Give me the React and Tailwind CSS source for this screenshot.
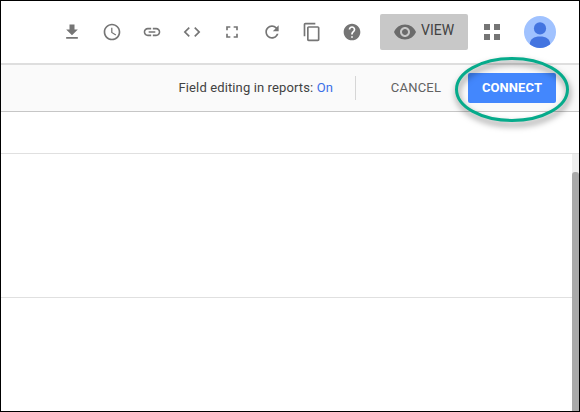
const ICONS = [
  { name: 'Download', d: 'M19 9h-4V3H9v6H5l7 7 7-7zM5 18v2h14v-2H5z' },
  { name: 'Schedule', d: 'M11.99 2C6.47 2 2 6.48 2 12s4.47 10 9.99 10C17.52 22 22 17.52 22 12S17.52 2 11.99 2zM12 20c-4.42 0-8-3.58-8-8s3.58-8 8-8 8 3.58 8 8-3.58 8-8 8zm.5-13H11v6l5.25 3.15.75-1.23-4.5-2.67z' },
  { name: 'Link', d: 'M3.9 12c0-1.71 1.39-3.1 3.1-3.1h4V7H7c-2.76 0-5 2.24-5 5s2.24 5 5 5h4v-1.9H7c-1.71 0-3.1-1.39-3.1-3.1zM8 13h8v-2H8v2zm9-6h-4v1.9h4c1.71 0 3.1 1.39 3.1 3.1s-1.39 3.1-3.1 3.1h-4V17h4c2.76 0 5-2.24 5-5s-2.24-5-5-5z' },
  { name: 'Embed', d: 'M9.4 16.6L4.8 12l4.6-4.6L8 6l-6 6 6 6 1.4-1.4zm5.2 0l4.6-4.6-4.6-4.6L16 6l6 6-6 6-1.4-1.4z' },
  { name: 'Fullscreen', d: 'M7 14H5v5h5v-2H7v-3zm-2-4h2V7h3V5H5v5zm12 7h-3v2h5v-5h-2v3zM14 5v2h3v3h2V5h-5z' },
  { name: 'Refresh', d: 'M17.65 6.35C16.2 4.9 14.21 4 12 4c-4.42 0-7.99 3.58-7.99 8s3.57 8 7.99 8c3.73 0 6.84-2.55 7.73-6h-2.08c-.82 2.33-3.04 4-5.65 4-3.31 0-6-2.69-6-6s2.69-6 6-6c1.66 0 3.14.69 4.22 1.78L13 11h7V4l-2.35 2.35z' },
  { name: 'Copy', d: 'M16 1H4c-1.1 0-2 .9-2 2v14h2V3h12V1zm3 4H8c-1.1 0-2 .9-2 2v14c0 1.1.9 2 2 2h11c1.1 0 2-.9 2-2V7c0-1.1-.9-2-2-2zm0 16H8V7h11v14z' },
  { name: 'Help', d: 'M12 2C6.48 2 2 6.48 2 12s4.48 10 10 10 10-4.48 10-10S17.52 2 12 2zm1 17h-2v-2h2v2zm2.07-7.75l-.9.92C13.45 12.9 13 13.5 13 15h-2v-.5c0-1.1.45-2.1 1.17-2.83l1.24-1.26c.37-.36.59-.86.59-1.41 0-1.1-.9-2-2-2s-2 .9-2 2H8c0-2.21 1.79-4 4-4s4 1.79 4 4c0 .88-.36 1.68-.93 2.25z' },
];

const EYE =
  'M12 4.5C7 4.5 2.73 7.61 1 12c1.73 4.39 6 7.5 11 7.5s9.27-3.11 11-7.5c-1.73-4.39-6-7.5-11-7.5zM12 17c-2.76 0-5-2.24-5-5s2.24-5 5-5 5 2.24 5 5-2.24 5-5 5zm0-8c-1.66 0-3 1.34-3 3s1.34 3 3 3 3-1.34 3-3-1.34-3-3-3z';

function Icon({ d, className }) {
  return (
    <svg viewBox="0 0 24 24" fill="currentColor" aria-hidden="true" className={className}>
      <path d={d} />
    </svg>
  );
}

function Avatar() {
  return (
    <svg viewBox="0 0 32 32" className="ml-6 size-8" aria-label="Account">
      <circle cx="16" cy="16" r="16" fill="#a0c2ff" />
      <circle cx="16" cy="12.4" r="6.1" fill="#4374e0" />
      <path d="M5.8 28.3C5.8 23 10 20.4 16 20.4S26.2 23 26.2 28.3A16 16 0 0 1 5.8 28.3z" fill="#4374e0" />
    </svg>
  );
}

function Toolbar() {
  return (
    <header className="flex h-16 shrink-0 items-center justify-end border-b-2 border-[#dedede] pr-[23px] text-[#757575]">
      <div className="flex gap-5">
        {ICONS.map((icon) => (
          <button key={icon.name} aria-label={icon.name}>
            <Icon d={icon.d} className="block size-5" />
          </button>
        ))}
      </div>
      <button className="ml-[18px] flex h-9 w-[88px] items-center rounded-[2px] bg-[#c8c8c8] pl-[13px]">
        <Icon d={EYE} className="block size-6 text-[#6b6b6b]" />
        <span className="ml-1 pb-1 text-sm leading-5 text-[#424242]">VIEW</span>
      </button>
      <div className="ml-4 grid grid-cols-2 gap-1">
        <i className="size-1.5 bg-[#757575]" />
        <i className="size-1.5 bg-[#757575]" />
        <i className="size-1.5 bg-[#757575]" />
        <i className="size-1.5 bg-[#757575]" />
      </div>
      <Avatar />
    </header>
  );
}

function ActionBar() {
  return (
    <section className="flex h-[47px] shrink-0 items-center justify-end border-b border-[#c6c6c6] bg-[#fafafa] pr-[23px] text-[13px]">
      <p className="tracking-[0.12px] text-[#424242]">
        Field editing in reports: <a className="text-[#3b6fe8]">On</a>
      </p>
      <div className="ml-[22px] h-6 w-px bg-[#d6d6d6]" />
      <button className="ml-[21px] w-[78px] tracking-[0.2px] text-[#616161]">CANCEL</button>
      <div className="relative ml-[13px]">
        <button className="block h-[30px] w-[88px] rounded-[2px] bg-[#4387fd] font-bold tracking-[0.1px] text-white">CONNECT</button>
        <svg
          viewBox="0 0 124 76"
          className="pointer-events-none absolute -top-[21px] -left-[18px] h-[76px] w-[124px] overflow-visible drop-shadow-[1px_4px_3px_rgba(0,0,0,0.5)]"
        >
          <ellipse cx="62" cy="37.5" rx="55.5" ry="31" fill="none" stroke="#06ab8b" strokeWidth="3" />
        </svg>
      </div>
    </section>
  );
}

export default function App() {
  return (
    <div className="flex h-[412px] w-[580px] flex-col overflow-hidden border border-black bg-white font-[Roboto,sans-serif]">
      <Toolbar />
      <ActionBar />
      <div className="h-[42px] shrink-0 border-b border-[#e0e0e0]" />
      <main className="flex min-h-0 grow">
        <div className="grow">
          <div className="h-36 border-b border-[#e0e0e0]" />
        </div>
        <div className="w-[7px] bg-[#eeeeee] pt-[18px]">
          <div className="h-full rounded-t-[3px] bg-[#a9a9a9]" />
        </div>
      </main>
    </div>
  );
}
